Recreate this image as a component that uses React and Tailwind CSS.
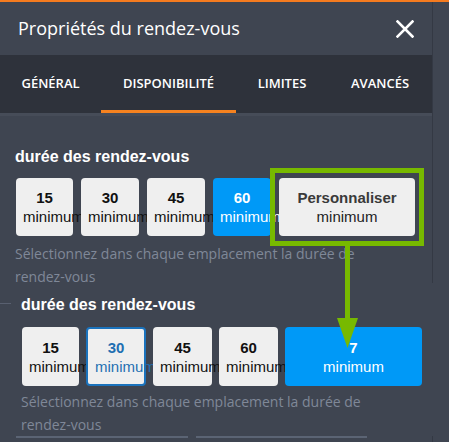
import React from "react";

const arial = { fontFamily: '"Liberation Sans", Arial, sans-serif' };

function DurBtn({ num, w, variant = "plain", label = "minimum" }) {
  const base =
    "h-full shrink-0 rounded-[4px] flex flex-col justify-center px-[7px] text-center leading-[19px] text-[15px] whitespace-nowrap";
  let cls = "bg-[#efefef] text-[#111]";
  let numCls = "text-[#111]";
  if (variant === "blue") {
    cls = "bg-[#0099f7] text-white";
    numCls = "text-white";
  } else if (variant === "sel") {
    cls = "bg-[#efefef] text-[#1f6fb2] border-2 border-[#1b73bd]";
    numCls = "text-[#1f6fb2]";
  } else if (variant === "custom") {
    cls = "bg-[#efefef] text-[#222]";
    numCls = "text-[#3a3a3a]";
  }
  return (
    <div className={`${base} ${cls}`} style={{ width: w }}>
      <div className={`font-bold ${numCls}`}>{num}</div>
      <div>{label}</div>
    </div>
  );
}

export default function App() {
  return (
    <div
      className="relative w-[449px] h-[442px] overflow-hidden bg-[#3f4551]"
      style={{ fontFamily: '"Open Sans", "Noto Sans", sans-serif' }}
    >
      <div className="h-[2px] bg-[#f57b1f]" />
      <div className="flex">
        <div className="w-[432px] shrink-0">
          {/* header */}
          <div className="h-[53px] flex items-center justify-between pl-[18px] pr-[18px]">
            <span className="text-white text-[18px]">Propriétés du rendez-vous</span>
            <svg width="18" height="18" viewBox="0 0 18 18">
              <path d="M1.5 1.5 L16.5 16.5 M16.5 1.5 L1.5 16.5" stroke="#fff" strokeWidth="2.6" strokeLinecap="square" />
            </svg>
          </div>
          {/* tabs */}
          <div className="h-[61px] bg-[#2e323b] border-b-[3px] border-[#464c58] flex text-white text-[13px] font-semibold">
            <div className="w-[101px] flex items-center justify-center">GÉNÉRAL</div>
            <div className="w-[135px] flex flex-col">
              <div className="flex-1 flex items-center justify-center pt-[3px]">DISPONIBILITÉ</div>
              <div className="h-[3px] bg-[#f6821f]" />
            </div>
            <div className="w-[92px] flex items-center justify-center">LIMITES</div>
            <div className="w-[104px] flex items-center justify-center">AVANCÉS</div>
          </div>
          {/* section 1 */}
          <div className="pl-[15px] pt-[31px]">
            <div className="text-white font-bold text-[16px] leading-[20px]" style={arial}>
              durée des rendez-vous
            </div>
            <div className="mt-[11px] h-[58px] flex gap-[8px] pl-[1px]" style={arial}>
              <DurBtn num="15" w={57} />
              <DurBtn num="30" w={58} />
              <DurBtn num="45" w={58} />
              <DurBtn num="60" w={58} variant="blue" />
              <div className="relative h-full">
                <DurBtn num="Personnaliser" w={136} variant="custom" />
                <div className="absolute left-[-9px] right-[-9px] top-[-10px] bottom-[-10px] border-[5px] border-[#77b900]" />
              </div>
            </div>
            <div className="mt-[6px] text-[14px] leading-[23px] text-[#7f8898] w-[370px]">
              Sélectionnez dans chaque emplacement la durée de rendez-vous
            </div>
          </div>
        </div>
        <div className="self-start h-[281px] w-[17px] border-l border-[#343944]" />
      </div>
      {/* section 2 */}
      <div className="flex">
        <div className="w-[11px] h-px mt-[15px] bg-[#596070] shrink-0" />
        <div className="ml-[10px] pt-[7px]">
          <div className="text-white font-bold text-[16px] leading-[20px]" style={arial}>
            durée des rendez-vous
          </div>
          <div className="mt-[12px] h-[59px] flex gap-[7px] pl-[1px]" style={arial}>
            <DurBtn num="15" w={57} />
            <DurBtn num="30" w={60} variant="sel" />
            <DurBtn num="45" w={59} />
            <DurBtn num="60" w={59} />
            <DurBtn num="7" w={137} variant="blue" />
          </div>
          <div className="mt-[4px] text-[14px] leading-[23px] text-[#7f8898] w-[370px]">
            Sélectionnez dans chaque emplacement la durée de rendez-vous
          </div>
          <div className="-ml-[5px] flex items-start">
            <div className="w-[172px] h-[2px] bg-[#5b6474]" />
            <div className="ml-[8px] w-[171px] h-[2px] bg-[#5b6474]" />
            <div className="ml-[65px] w-px h-[8px] bg-[#343944]" />
          </div>
        </div>
      </div>
      {/* connector arrow */}
      <svg className="absolute left-0 top-0 pointer-events-none" width="449" height="442">
        <rect x="345" y="246" width="5" height="74" fill="#77b900" />
        <polygon points="337,318 358,318 347.5,348" fill="#77b900" />
      </svg>
    </div>
  );
}
